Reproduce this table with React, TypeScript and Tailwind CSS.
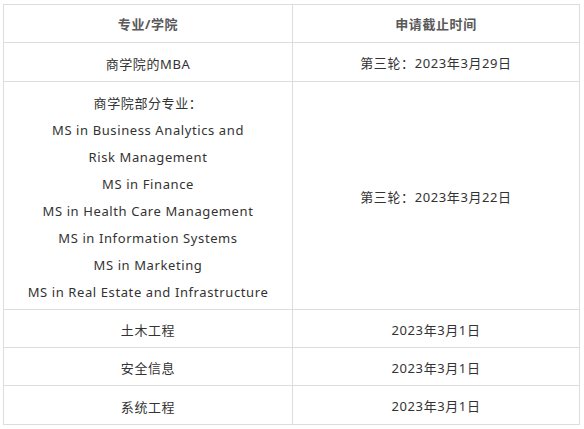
const rows: { name: string[]; date: string; h: string }[] = [
  { name: ['商学院的MBA'], date: '第三轮：2023年3月29日', h: 'h-[39px]' },
  {
    name: [
      '商学院部分专业：',
      'MS in Business Analytics and',
      'Risk Management',
      'MS in Finance',
      'MS in Health Care Management',
      'MS in Information Systems',
      'MS in Marketing',
      'MS in Real Estate and Infrastructure',
    ],
    date: '第三轮：2023年3月22日',
    h: 'h-[228px]',
  },
  { name: ['土木工程'], date: '2023年3月1日', h: 'h-[38px]' },
  { name: ['安全信息'], date: '2023年3月1日', h: 'h-[38px]' },
  { name: ['系统工程'], date: '2023年3月1日', h: 'h-[39px]' },
];

export default function App() {
  return (
    <div className="w-[584px] h-[429px] bg-white pt-[4px] pl-[3px] font-['Noto_Sans','Noto_Sans_CJK_SC',sans-serif] text-[13px] text-[#333] tracking-[0.6px]">
      <table className="w-[576px] border-collapse table-fixed">
        <colgroup>
          <col className="w-[289px]" />
          <col className="w-[287px]" />
        </colgroup>
        <thead>
          <tr className="h-[38px]">
            <th className="border border-[#dddddd] pt-[3px] font-bold text-[#595959] text-center align-middle">专业/学院</th>
            <th className="border border-[#dddddd] pt-[3px] font-bold text-[#595959] text-center align-middle">申请截止时间</th>
          </tr>
        </thead>
        <tbody>
          {rows.map((r, i) => (
            <tr key={i} className={r.h}>
              <td className="border border-[#dddddd] pt-[4px] text-center align-middle leading-[27px]">
                {r.name.map((n, j) => (
                  <div key={j}>{n}</div>
                ))}
              </td>
              <td className="border border-[#dddddd] pt-[4px] text-center align-middle">{r.date}</td>
            </tr>
          ))}
        </tbody>
      </table>
    </div>
  );
}
